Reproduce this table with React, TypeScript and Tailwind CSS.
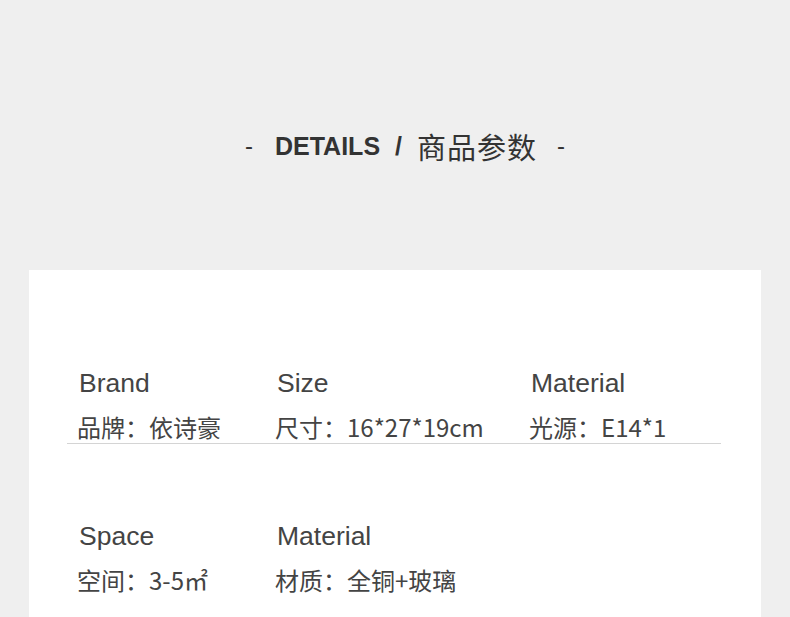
const rows = [
  [
    { en: 'Brand', zh: '品牌：依诗豪', w: 'w-[198px]' },
    { en: 'Size', zh: '尺寸：16*27*19cm', w: 'w-[254px]' },
    { en: 'Material', zh: '光源：E14*1', w: 'w-[180px]' },
  ],
  [
    { en: 'Space', zh: '空间：3-5㎡', w: 'w-[198px]' },
    { en: 'Material', zh: '材质：全铜+玻璃', w: 'w-[254px]' },
  ],
];

export default function App() {
  return (
    <div className="min-h-[617px] bg-[#efefef] overflow-hidden">
      <header className="h-[270px] pt-[130px] pl-[20px]">
        <div className="flex items-center justify-center text-[#333] leading-[32px] font-['Liberation_Sans','Noto_Sans_CJK_SC',sans-serif]">
          <span className="text-[24px] mr-[22px]">-</span>
          <span className="text-[25px] font-bold mr-[15px]">DETAILS</span>
          <span className="text-[25px] font-bold mr-[15px]">/</span>
          <span className="text-[29px] tracking-[1px] font-['Noto_Sans_CJK_SC',sans-serif] mr-[20px]">商品参数</span>
          <span className="text-[24px]">-</span>
        </div>
      </header>

      <section className="mx-auto w-[732px] min-h-[347px] bg-white pl-[38px] pt-[98px]">
        {rows.map((row, i) => (
          <div
            key={i}
            className={`flex w-[654px] pl-[10px] ${i === 0 ? 'border-b border-[#d4d4d4] mb-[77px]' : ''}`}
          >
            {row.map((cell) => (
              <div key={cell.zh} className={cell.w}>
                <div className="text-[26.5px] leading-[30px] pl-[2px] text-[#444] font-['Liberation_Sans',sans-serif] mb-[13px]">
                  {cell.en}
                </div>
                <div className="text-[24px] leading-[32px] text-[#444] font-['Noto_Sans_CJK_SC',sans-serif]">
                  {cell.zh}
                </div>
              </div>
            ))}
          </div>
        ))}
      </section>
    </div>
  );
}
